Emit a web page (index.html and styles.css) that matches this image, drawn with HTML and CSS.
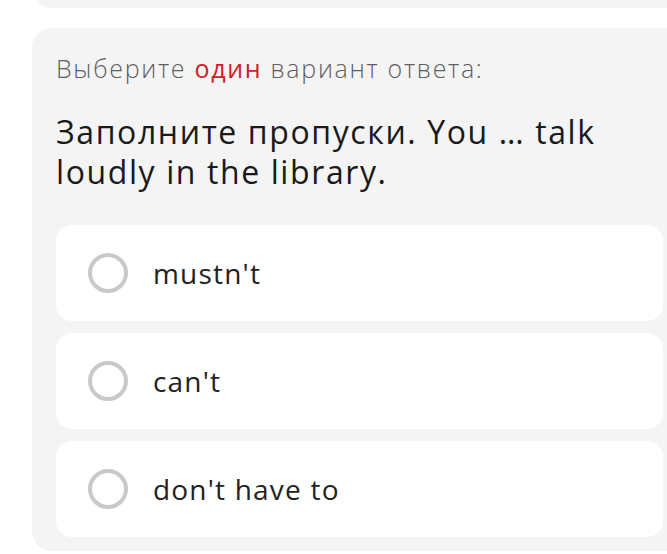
FILE: index.html
```html
<!DOCTYPE html>
<html lang="ru">
<head>
    <meta charset="UTF-8">
    <meta name="viewport" content="width=device-width, initial-scale=1.0">
    <title>Тест</title>
    <link rel="stylesheet" href="styles.css">
</head>
<body>
    <div class="quiz">
        <!-- previous question, scrolled up -->
        <div class="quiz-card quiz-card--prev"></div>

        <div class="quiz-card">
            <p class="quiz-hint">Выберите <span class="quiz-hint__accent">один</span> вариант ответа:</p>
            <h2 class="quiz-question">Заполните пропуски. You … talk loudly in the library.</h2>
            <div class="quiz-options">
                <label class="quiz-option">
                    <span class="quiz-radio"></span>
                    <span class="quiz-option__text">mustn't</span>
                </label>
                <label class="quiz-option">
                    <span class="quiz-radio"></span>
                    <span class="quiz-option__text">can't</span>
                </label>
                <label class="quiz-option">
                    <span class="quiz-radio"></span>
                    <span class="quiz-option__text">don't have to</span>
                </label>
            </div>
        </div>
    </div>
</body>
</html>
```

FILE: styles.css
```css
html, body {
    margin: 0;
    padding: 0;
    background-color: #fff;
    overflow: hidden;
}
body {
    font-family: "Open Sans", Lato, Arial, sans-serif;
    color: #1c1c1c;
}
.quiz {
    padding-left: 32px;
    margin-right: -24px;
}
.quiz-card {
    background-color: #f4f4f4;
    border-radius: 20px;
    padding: 24px 28px 14px 24px;
    margin-top: 20px;
}
.quiz-card--prev {
    height: 40px;
    padding: 0;
    margin-top: -32px;
}
.quiz-hint {
    margin: 0;
    font-size: 25px;
    font-weight: 300;
    line-height: 32px;
    letter-spacing: 1.7px;
    color: #5f5f5f;
}
.quiz-hint__accent {
    color: #cf2029;
    font-weight: 400;
}
.quiz-question {
    margin: 28px 0 0 0;
    font-size: 32px;
    font-weight: 400;
    line-height: 40px;
    letter-spacing: 1.6px;
    color: #1a1a1a;
}
.quiz-options {
    display: flex;
    flex-direction: column;
    gap: 12px;
    margin-top: 33px;
}
.quiz-option {
    display: flex;
    align-items: center;
    height: 96px;
    padding-left: 32px;
    background-color: #fff;
    border-radius: 16px;
    cursor: pointer;
}
.quiz-radio {
    width: 32px;
    height: 32px;
    border: 4px solid #c9c9c9;
    border-radius: 50%;
    flex-shrink: 0;
}
.quiz-option__text {
    margin-left: 25px;
    font-size: 28px;
    letter-spacing: 1.2px;
    color: #222;
}
```
